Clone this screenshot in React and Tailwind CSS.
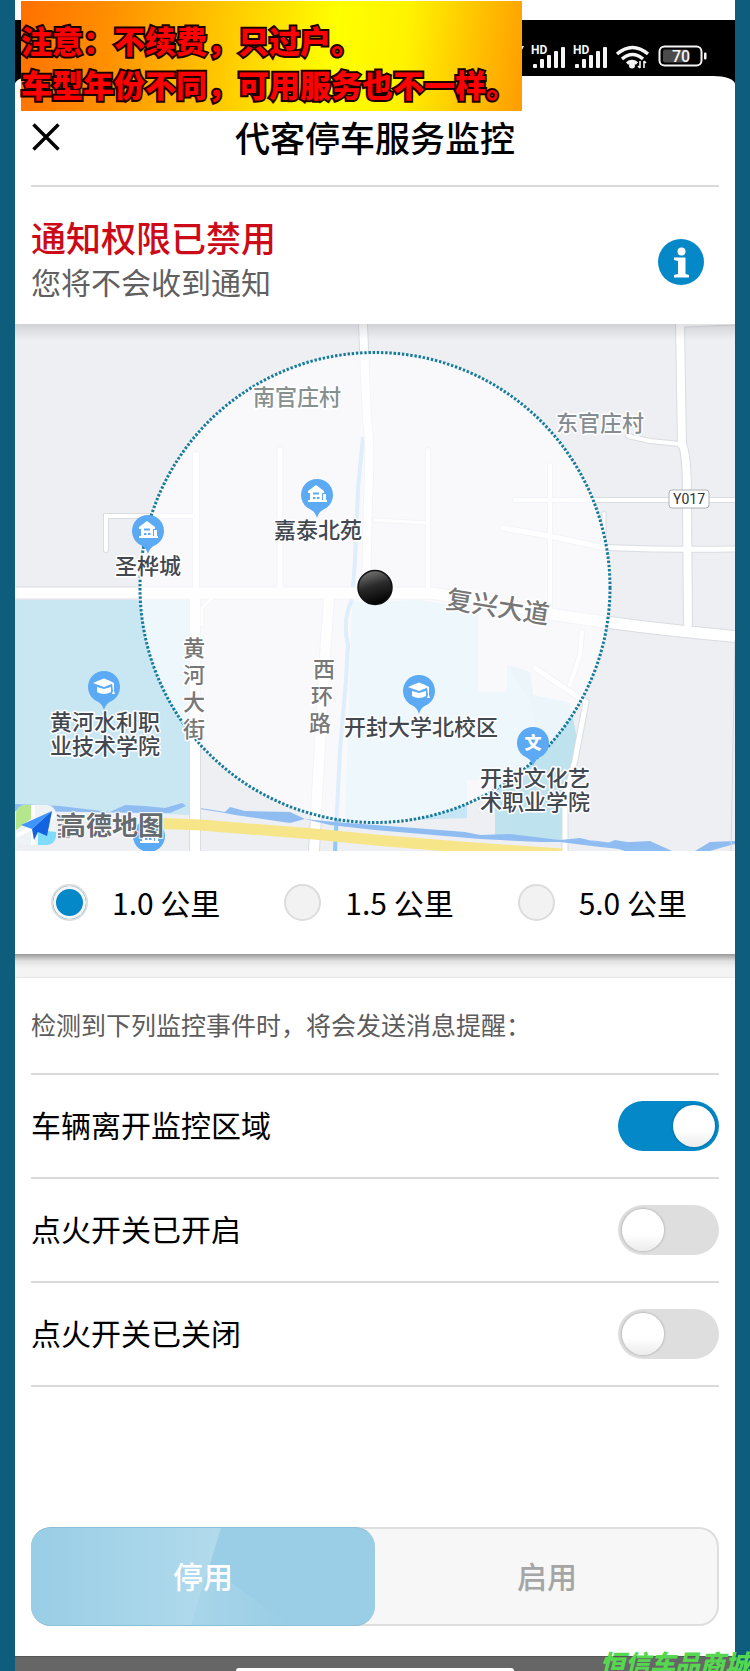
import React from "react";

const BLUE = "#0488c8";

function Signal({ x }) {
  return (
    <g fill="#f5f5f5">
      <text x={x - 2} y="10" fontSize="12" fontWeight="700" fontFamily="Roboto, sans-serif">HD</text>
      <rect x={x} y="20" width="4" height="4" rx="1" />
      <rect x={x + 7} y="15" width="4" height="9" rx="1" />
      <rect x={x + 14} y="11" width="4" height="13" rx="1" />
      <rect x={x + 21} y="7" width="4" height="17" rx="1" />
      <rect x={x + 28} y="3" width="4" height="21" rx="1" />
    </g>
  );
}

function StatusIcons() {
  return (
    <svg viewBox="0 0 190 28" className="h-7 w-[190px]" aria-label="70%">
      <path d="M0 2h4l-3 6h-1z" fill="#f5f5f5" />
      <Signal x={13} />
      <Signal x={55} />
      <g fill="none" stroke="#f5f5f5" strokeWidth="3.4">
        <path d="M97 10q15.500-13 31 0" />
        <path d="M102 15q10.500-9 21 0" />
        <path d="M107 19.500q5-4 10 0" />
      </g>
      <circle cx="112" cy="21.500" r="3" fill="#f5f5f5" />
      <path d="M120 17v7m0 0l-2-2m6 2v-7m0 0l2 2" stroke="#f5f5f5" strokeWidth="1.600" fill="none" />
      <rect x="139.500" y="2.500" width="42" height="19" rx="5" fill="none" stroke="#f5f5f5" strokeWidth="2" />
      <rect x="143" y="5.500" width="25" height="13" rx="2" fill="#4b4b4b" />
      <rect x="184" y="8.500" width="2.500" height="7" rx="1" fill="#f5f5f5" />
      <text x="161" y="18" fontSize="16" fontWeight="500" textAnchor="middle" fill="#f5f5f5" fontFamily="Roboto, sans-serif">70</text>
    </svg>
  );
}

function Pin({ x, y, children }) {
  return (
    <g transform={`translate(${x} ${y})`}>
      <path d="M0 23C-2 16-6 15-10 12.500A16 16 0 1 1 10 12.500C6 15 2 16 0 23Z" fill="#5caaf3" />
      {children}
    </g>
  );
}

function House() {
  return (
    <g>
      <path d="M-9-4L-1-10 7-4v2H5V5H6V-1h3V5h1V7H-9V5H-7V-2H-9Z" fill="#fff" />
      <path d="M-4-1.500h6M-4 3h2.500M0 3h2.500" stroke="#5caaf3" strokeWidth="1.800" />
    </g>
  );
}

function Cap() {
  return (
    <g fill="#fff">
      <path d="M-11-4Q-5-7 0-8.500Q5-7 10-4L0 0Z" />
      <path d="M-7 0L0 2 7 0V5Q0 9-7 5Z" />
      <path d="M8-4h2v8l1 3h-3l1-3z" />
    </g>
  );
}

function Label({ x, y, tone = "#42484f", size = 22, lines, step = 24, slant = 0, children, ...rest }) {
  return (
    <text
      x={x}
      y={y}
      fontSize={size}
      fontWeight="500"
      fill={tone}
      textAnchor="middle"
      stroke="#ffffff"
      strokeWidth="3"
      strokeLinejoin="round"
      paintOrder="stroke"
      {...rest}
    >
      {lines
        ? lines.map((line, i) => (
            <tspan key={line} x={x + i * slant} dy={i === 0 ? 0 : step}>{line}</tspan>
          ))
        : children}
    </text>
  );
}

const ROADS = [
  ["M15 593H430Q490 601 550 614Q640 628 740 637", 11],
  ["M363 324L367 420Q371 445 368 500L366 590", 8],
  ["M196 455V590", 6],
  ["M195 596V851", 10],
  ["M280 450V590", 5],
  ["M106 550V516L195 516", 4],
  ["M329 598L325 655L314 851", 10],
  ["M680 324L682 445Q687 450 687 500L688 624", 8],
  ["M628 436L650 441L680 444", 4],
  ["M684 325L735 323", 3],
  ["M515 500H735", 4],
  ["M503 528L550 536L600 547Q650 550 735 549", 5],
  ["M550 465V612", 4],
  ["M428 450V590", 4],
  ["M375 520L428 523", 3],
  ["M604 513V540", 3],
  ["M535 668L560 685L586 702L575 760L565 800V851", 5],
  ["M582 632L580 655L570 685", 4],
  ["M202 625V608L212 598", 3],
];

function Map() {
  return (
    <svg viewBox="15 324 720 527" className="block w-full" role="img" aria-label="地图">
      <defs>
        <linearGradient id="top" x1="0" y1="0" x2="0" y2="1">
          <stop offset="0" stopColor="#000" stopOpacity="0.12" />
          <stop offset="1" stopColor="#000" stopOpacity="0" />
        </linearGradient>
        <linearGradient id="ball" x1="0.3" y1="0" x2="0.6" y2="1">
          <stop offset="0" stopColor="#777" />
          <stop offset="0.45" stopColor="#2b2b2b" />
          <stop offset="1" stopColor="#000" />
        </linearGradient>
      </defs>
      <rect x="15" y="324" width="720" height="527" fill="#edeff3" />
      <path d="M15 600H190V815L15 808Z" fill="#c9e6f3" />
      <path d="M352 602L420 600L478 610V692H507V665L530 672L533 695L570 703L577 740L563 842L495 838V780H467V818L345 822Z" fill="#c6e6f6" />
      <path d="M507 665L530 672L533 695L570 703L577 740L563 842L495 838V780L540 745L530 700Z" fill="#bfe2ef" />
      <path d="M363 437L358 490L355 560L352 600Q342 620 348 645L346 680L340 750L335 851" fill="none" stroke="#93c9f3" strokeWidth="4" />
      <g fill="#8fbdf2">
        <path d="M15 804L60 806L110 812L125 805L145 806L165 808L182 803L186 806L170 813L150 813L15 811Z" />
        <path d="M200 808L225 812L230 807L245 811L290 812L305 819L290 823L235 815L225 813L200 809Z" />
        <path d="M590 840L612 843L650 841L672 851H625Z" />
        <path d="M695 851L710 842L735 841V844L720 848L710 851Z" />
      </g>
      <g fill="none" strokeLinecap="round">
        {ROADS.map(([d, w]) => <path key={d} d={d} stroke="#d9dce1" strokeWidth={w + 2} />)}
        {ROADS.map(([d, w]) => <path key={d} d={d} stroke="#fff" strokeWidth={w} />)}
      </g>
      <path d="M150 823L200 825L314 834L375 840L460 847L562 854" fill="none" stroke="#f7e58a" strokeWidth="11" />
      <path d="M735 640L731 851" stroke="#d5d8dc" />
      <circle cx="375" cy="587.500" r="235" fill="#fdfdff" fillOpacity="0.700" />
      <path
        d="M305 819L335 822L375 825L440 830L465 832L480 835L510 834L560 840L580 838L605 844L615 840L645 845L640 851L600 847L560 842L540 842L480 839L375 830L330 825Z"
        fill="#8fbdf2"
      />
      <circle cx="375" cy="587.500" r="235" fill="none" stroke="#167a9b" strokeWidth="3" strokeDasharray="2.400 1.800" />
      <g fontFamily='"Noto Sans CJK SC", sans-serif'>
        <Label x={297} y={405} tone="#86908f">南官庄村</Label>
        <Label x={600} y={431} tone="#868d92">东官庄村</Label>
        <Label x={318} y={538}>嘉泰北苑</Label>
        <Label x={148} y={574}>圣桦城</Label>
        <Label x={498} y={616} size={26} tone="#777" transform="rotate(9 498 606)">复兴大道</Label>
        <Label x={194} y={656} tone="#777" step={27} lines={["黄", "河", "大", "街"]} />
        <Label x={324} y={677} tone="#777" step={27} slant={-2} lines={["西", "环", "路"]} />
        <Label x={105} y={730} lines={["黄河水利职", "业技术学院"]} />
        <Label x={421} y={735}>开封大学北校区</Label>
        <Label x={535} y={786} lines={["开封文化艺", "术职业学院"]} />
        <rect x="669" y="490" width="40" height="18" rx="3" fill="#fff" stroke="#aeb2b6" />
        <text x="689" y="504" fontSize="14" textAnchor="middle" fill="#333" fontFamily="Roboto, sans-serif">Y017</text>
        <Pin x={317} y={495}><House /></Pin>
        <Pin x={148} y={531}><House /></Pin>
        <Pin x={104} y={687}><Cap /></Pin>
        <Pin x={419} y={691}><Cap /></Pin>
        <Pin x={533} y={743}>
          <text y="6" fontSize="17" fontWeight="900" textAnchor="middle" fill="#fff">文</text>
        </Pin>
        <Pin x={149} y={836}><House /></Pin>
        <clipPath id="logo"><rect x="16" y="805" width="40" height="40" rx="9" /></clipPath>
        <g clipPath="url(#logo)">
          <rect x="16" y="805" width="40" height="40" fill="#eef3f5" />
          <path d="M16 805H32V818L16 830Z" fill="#b4e68c" />
          <path d="M38 845V830L56 832V845Z" fill="#7fdcf8" />
          <path d="M33 805V845M16 836L56 815" stroke="#fff" strokeWidth="4" />
        </g>
        <path d="M52 811L21 825L32 829Z" fill="#3f95fa" />
        <path d="M52 811L32 829L34 840L38 832L47 836Z" fill="#1263e0" />
        <path d="M57 815l7 4m-7 1h9m-8 5h8m-8 5h9m-9 4h10m-10 3h12m-9-22l4 4" stroke="#666" strokeWidth="1.600" fill="none" />
        <Label x={112} y={835} size={26} tone="#666b70" fontWeight="700" strokeWidth="2">高德地图</Label>
      </g>
      <circle cx="375" cy="587.500" r="17" fill="url(#ball)" stroke="#111" strokeWidth="1.500" />
      <rect x="15" y="324" width="720" height="16" fill="url(#top)" />
    </svg>
  );
}

function RadioItem({ label, checked }) {
  return (
    <label className="flex items-center gap-6">
      <input
        type="radio"
        name="distance"
        defaultChecked={checked}
        className="size-[37px] appearance-none rounded-full border-2 border-[#dcdcdc] bg-[#f2f2f2] checked:bg-[#0488c8] checked:shadow-[inset_0_0_0_3px_#f6f6f6]"
      />
      <span className="pb-0.5">{label}</span>
    </label>
  );
}

function SwitchRow({ label, checked }) {
  return (
    <label className="flex h-[104px] items-center justify-between border-b-2 border-[#d9d9d9]">
      <span className="pb-1">{label}</span>
      <input
        type="checkbox"
        role="switch"
        defaultChecked={checked}
        className="flex h-[50px] w-[101px] appearance-none items-center rounded-full bg-[#dedede] p-1 before:size-[42px] before:rounded-full before:bg-linear-to-b before:from-white before:from-60% before:to-[#ececec] before:shadow-[0_0_2px_1px_rgba(0,0,0,0.15)] checked:justify-end checked:bg-[#0488c8]"
      />
    </label>
  );
}

export default function App() {
  return (
    <div className="relative flex min-h-screen flex-col overflow-hidden bg-[#0f5d7c] px-[15px] font-['Noto_Sans_CJK_SC',sans-serif] text-[30px] leading-[44px] text-black">
      <main className="flex flex-1 flex-col bg-white pt-5">
        <div className="bg-black">
          <div className="flex h-14 items-start justify-end pt-6 pr-[25px]">
            <StatusIcons />
          </div>
          <header className="bg-white px-4 [border-radius:22px_22px_0_0/8px_8px_0_0]">
            <div className="grid h-[111px] grid-cols-[44px_1fr_44px] items-center border-b-2 border-[#d9d9d9] pt-3">
              <button type="button" aria-label="关闭" className="flex">
                <svg viewBox="0 0 30 30" className="size-[30px]">
                  <path d="M2.500 2.500L27.500 27.500M27.500 2.500L2.500 27.500" stroke="#000" strokeWidth="3.400" />
                </svg>
              </button>
              <h1 className="text-center text-[35px] font-medium">代客停车服务监控</h1>
            </div>
          </header>
        </div>

        <section className="flex items-start justify-between pt-7 pr-[31px] pb-[21px] pl-4">
          <div>
            <h2 className="text-[35px] font-medium text-[#cc0a18]">通知权限已禁用</h2>
            <p className="text-[#606060]">您将不会收到通知</p>
          </div>
          <button type="button" aria-label="信息" className="mt-6">
            <svg viewBox="0 0 46 46" className="size-[46px]">
              <circle cx="23" cy="23" r="23" fill={BLUE} />
              <circle cx="23.500" cy="12.500" r="4" fill="#fff" />
              <path d="M16 18.500h11.500V35l3.500 1v2.500H16V36l4-1V22l-4-1z" fill="#fff" />
            </svg>
          </button>
        </section>

        <Map />

        <div role="radiogroup" aria-label="监控范围" className="flex h-[103px] items-center justify-between bg-white pr-12 pl-9">
          <RadioItem label="1.0 公里" checked />
          <RadioItem label="1.5 公里" />
          <RadioItem label="5.0 公里" />
        </div>
        <div className="h-6 border-b border-[#e8e8e8] bg-linear-to-b from-[#9a9a9a] via-[#e0e0e0] via-30% to-[#f4f4f4] to-60%" />

        <section className="bg-white px-4">
          <p className="flex h-[97px] items-center border-b-2 border-[#d9d9d9] pb-1 text-[25px] text-[#5c5c5c]">
            检测到下列监控事件时，将会发送消息提醒：
          </p>
          <SwitchRow label="车辆离开监控区域" checked />
          <SwitchRow label="点火开关已开启" />
          <SwitchRow label="点火开关已关闭" />
        </section>

        <div className="mx-4 mt-auto mb-[30px] grid h-[99px] grid-cols-2 rounded-[20px] bg-[#f7f7f7] shadow-[inset_0_0_0_2px_#dedede]">
          <button type="button" className="relative overflow-hidden rounded-[20px] border-y border-[#8cc0d8] bg-[#99cee6] pb-1 font-medium text-white">
            <svg viewBox="0 0 344 99" preserveAspectRatio="none" className="absolute inset-0 size-full">
              <defs>
                <linearGradient id="sheen" x1="0" y1="0" x2="1" y2="0">
                  <stop offset="0" stopColor="#fff" stopOpacity="0" />
                  <stop offset="1" stopColor="#fff" stopOpacity="0.250" />
                </linearGradient>
                <linearGradient id="fade" x1="0" y1="0" x2="1" y2="0">
                  <stop offset="0" stopColor="#fff" stopOpacity="0.150" />
                  <stop offset="1" stopColor="#fff" stopOpacity="0" />
                </linearGradient>
              </defs>
              <path d="M0 0H190L160 99H0Z" fill="url(#sheen)" />
              <path d="M178 40L160 99H260Z" fill="url(#fade)" />
            </svg>
            <span className="relative">停用</span>
          </button>
          <button type="button" className="pb-1 font-medium text-[#a5a5a5]">启用</button>
        </div>

        <footer className="flex h-[15px] items-end justify-center border-t border-[#555] bg-[#666]">
          <div className="h-[3px] w-[278px] rounded-t-[3px] bg-white" />
        </footer>
      </main>

      <p className="absolute top-px left-[21px] h-[110px] w-[501px] bg-[linear-gradient(97deg,#ff7000_0%,#ff9000_18%,#ffff00_62%,#fff200_76%,#ff9c00_100%)] pt-[17px] text-[31px] leading-[44px] font-black whitespace-nowrap text-[#ff0000] [-webkit-text-stroke:4px_#1a0000] [paint-order:stroke_fill]">
        注意：不续费，只过户。
        <br />
        车型年份不同，可用服务也不一样。
      </p>
      <p className="absolute right-0 -bottom-[7px] text-[25px] leading-8 font-black whitespace-nowrap text-[#55d850] italic">
        恒信车品商城
      </p>
    </div>
  );
}
